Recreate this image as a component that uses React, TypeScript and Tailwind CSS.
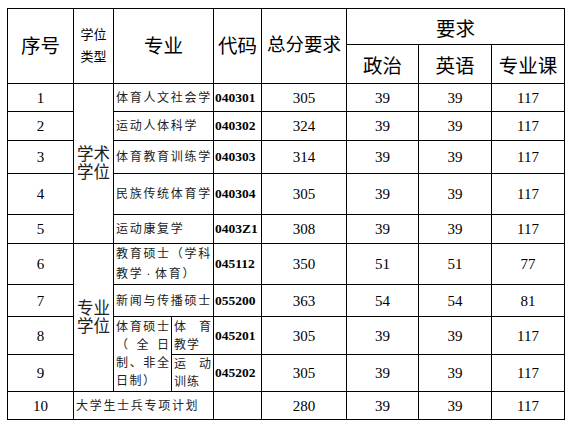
import React from 'react';

const cn = (...c: (string | false | undefined)[]) => c.filter(Boolean).join(' ');

const font = "font-['Liberation_Serif','Noto_Sans_CJK_SC',serif]";
const cell = 'border-[1.5px] border-black p-0 align-middle';
const num = 'text-center text-[15px] text-black';
const zh = 'text-left text-[12px] tracking-[1.7px] text-[#222] pl-[2px]';
const code = 'text-left pl-[1px] text-[13.5px] font-bold text-black';

type Row = { no: string; major: string; code: string; total: string; p: string; e: string; m: string; h: string };

const academic: Row[] = [
  { no: '1', major: '体育人文社会学', code: '040301', total: '305', p: '39', e: '39', m: '117', h: 'h-[28px]' },
  { no: '2', major: '运动人体科学', code: '040302', total: '324', p: '39', e: '39', m: '117', h: 'h-[29px]' },
  { no: '3', major: '体育教育训练学', code: '040303', total: '314', p: '39', e: '39', m: '117', h: 'h-[33px]' },
  { no: '4', major: '民族传统体育学', code: '040304', total: '305', p: '39', e: '39', m: '117', h: 'h-[41px]' },
  { no: '5', major: '运动康复学', code: '0403Z1', total: '308', p: '39', e: '39', m: '117', h: 'h-[29px]' },
];

function Scores({ total, p, e, m }: { total: string; p: string; e: string; m: string }) {
  return (
    <>
      <td className={cn(cell, num)}>{total}</td>
      <td className={cn(cell, num)}>{p}</td>
      <td className={cn(cell, num)}>{e}</td>
      <td className={cn(cell, num)}>{m}</td>
    </>
  );
}

function Spread({ children }: { children: string }) {
  // one justified line: characters spread over the full cell width
  return (
    <div className="flex justify-between">
      {children.split('').map((ch, i) => (
        <span key={i}>{ch}</span>
      ))}
    </div>
  );
}

export default function App() {
  return (
    <div className={cn('min-h-[427px] w-[577px] bg-white pl-[7px] pt-[8px]', font)}>
      <table className="w-[557px] table-fixed border-collapse">
        <colgroup>
          <col className="w-[66px]" />
          <col className="w-[40px]" />
          <col className="w-[58px]" />
          <col className="w-[42px]" />
          <col className="w-[48px]" />
          <col className="w-[85px]" />
          <col className="w-[72px]" />
          <col className="w-[73px]" />
          <col className="w-[73px]" />
        </colgroup>
        <thead>
          <tr className="h-[36px]">
            <th rowSpan={2} className={cn(cell, 'text-[19.5px] font-normal text-black')}>序号</th>
            <th rowSpan={2} className={cn(cell, 'text-[13px] font-normal leading-[22px] text-black')}>
              <div>学位</div>
              <div>类型</div>
            </th>
            <th rowSpan={2} colSpan={2} className={cn(cell, 'text-[19.5px] font-normal text-black')}>专业</th>
            <th rowSpan={2} className={cn(cell, 'text-[19.5px] font-normal text-black')}>代码</th>
            <th rowSpan={2} className={cn(cell, 'text-[18.5px] font-normal text-black')}>总分要求</th>
            <th colSpan={3} className={cn(cell, 'pt-[6px] text-[19.5px] font-normal text-black')}>要求</th>
          </tr>
          <tr className="h-[39px]">
            <th className={cn(cell, 'pt-[5px] text-[19.5px] font-normal text-black')}>政治</th>
            <th className={cn(cell, 'pt-[5px] text-[19.5px] font-normal text-black')}>英语</th>
            <th className={cn(cell, 'pt-[5px] text-[19.5px] font-normal text-black')}>专业课</th>
          </tr>
        </thead>
        <tbody>
          {academic.map((r, i) => (
            <tr key={r.no} className={r.h}>
              <td className={cn(cell, num)}>{r.no}</td>
              {i === 0 && (
                <td rowSpan={5} className={cn(cell, 'text-center text-[16.5px] leading-[18px] text-[#222]')}>
                  <div>学术</div>
                  <div>学位</div>
                </td>
              )}
              <td colSpan={2} className={cn(cell, zh)}>{r.major}</td>
              <td className={cn(cell, code)}>{r.code}</td>
              <Scores total={r.total} p={r.p} e={r.e} m={r.m} />
            </tr>
          ))}

          <tr className="h-[40px]">
            <td className={cn(cell, num)}>6</td>
            <td rowSpan={4} className={cn(cell, 'text-center text-[16.5px] leading-[18px] text-[#222]')}>
              <div>专业</div>
              <div>学位</div>
            </td>
            <td colSpan={2} className={cn(cell, zh, 'leading-[20px]')}>
              <div>教育硕士（学科</div>
              <div>
                教学<span className="px-[3px]">·</span>体育）
              </div>
            </td>
            <td className={cn(cell, code)}>045112</td>
            <Scores total="350" p="51" e="51" m="77" />
          </tr>
          <tr className="h-[32px]">
            <td className={cn(cell, num)}>7</td>
            <td colSpan={2} className={cn(cell, zh)}>新闻与传播硕士</td>
            <td className={cn(cell, code)}>055200</td>
            <Scores total="363" p="54" e="54" m="81" />
          </tr>
          <tr className="h-[38px]">
            <td className={cn(cell, num)}>8</td>
            <td rowSpan={2} className={cn(cell, 'px-[2px] text-[12px] leading-[18px] text-[#222]')}>
              <Spread>体育硕士</Spread>
              <Spread>（全日</Spread>
              <Spread>制、非全</Spread>
              <div className="tracking-[1.5px]">日制）</div>
            </td>
            <td className={cn(cell, 'px-[2px] text-[12px] leading-[18px] text-[#222]')}>
              <Spread>体育</Spread>
              <div className="tracking-[1px]">教学</div>
            </td>
            <td className={cn(cell, code)}>045201</td>
            <Scores total="305" p="39" e="39" m="117" />
          </tr>
          <tr className="h-[35px]">
            <td className={cn(cell, num)}>9</td>
            <td className={cn(cell, 'px-[2px] text-[12px] leading-[18px] text-[#222]')}>
              <Spread>运动</Spread>
              <div className="tracking-[1px]">训练</div>
            </td>
            <td className={cn(cell, code)}>045202</td>
            <Scores total="305" p="39" e="39" m="117" />
          </tr>
          <tr className="h-[28px]">
            <td className={cn(cell, num)}>10</td>
            <td colSpan={3} className={cn(cell, zh, 'pl-[1px]')}>大学生士兵专项计划</td>
            <td className={cn(cell)}></td>
            <Scores total="280" p="39" e="39" m="117" />
          </tr>
        </tbody>
      </table>
    </div>
  );
}
